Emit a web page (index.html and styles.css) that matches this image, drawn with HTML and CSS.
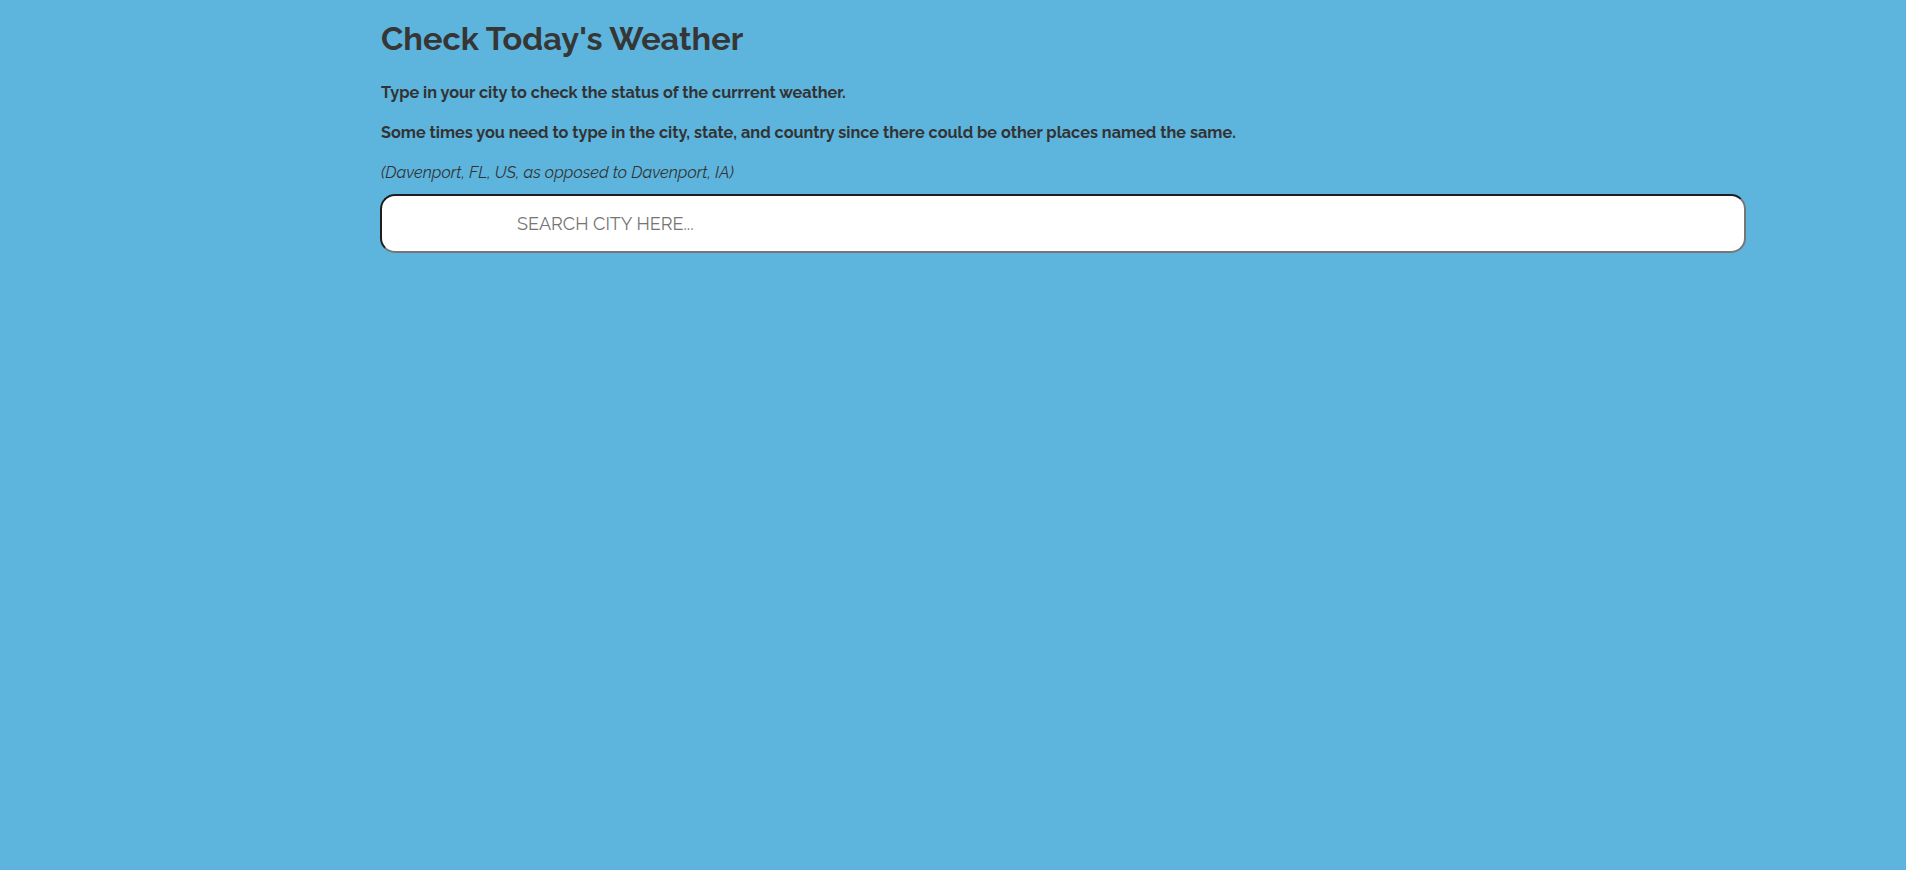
FILE: index.html
```html
<!DOCTYPE html>
<html lang="en">
<head>
<meta charset="utf-8">
<title>Weather</title>
<link rel="stylesheet" href="styles.css">
</head>
<body>
<main class="page">
  <h1 class="title">Check Today's Weather</h1>
  <p class="lead">Type in your city to check the status of the currrent weather.</p>
  <p class="lead">Some times you need to type in the city, state, and country since there could be other places named the same.</p>
  <p class="note">(Davenport, FL, US, as opposed to Davenport, IA)</p>
  <input class="search" type="text" placeholder="SEARCH CITY HERE...">
</main>
</body>
</html>
```

FILE: styles.css
```css
html, body {
  margin: 0;
  padding: 0;
  background: #5db5de;
}
body {
  font-family: "Raleway", Lato, "Open Sans", sans-serif;
  color: #333;
  min-height: 870px;
}
.page {
  width: 1366px;
  margin-left: 380px;
  padding-top: 20px;
}
.title {
  margin: 0 0 23px 1px;
  font-size: 32.5px;
  line-height: 38px;
  font-weight: 700;
  color: #363636;
}
.lead {
  margin: 0 0 16px 1px;
  font-size: 16.25px;
  line-height: 24px;
  font-weight: 700;
}
.note {
  margin: 0 0 9px 1px;
  font-size: 16.25px;
  line-height: 24px;
  font-style: italic;
}
.search {
  display: block;
  box-sizing: border-box;
  width: 1366px;
  height: 59px;
  margin: 0;
  padding: 0 0 0 135px;
  border: 2px solid;
  border-color: #1e1e1e #767676 #767676 #1e1e1e;
  border-radius: 15px;
  background: #fff;
  font-family: "Raleway", Lato, sans-serif;
  font-size: 18px;
  color: #333;
  outline: none;
}
.search::placeholder {
  color: #757575;
}
```
